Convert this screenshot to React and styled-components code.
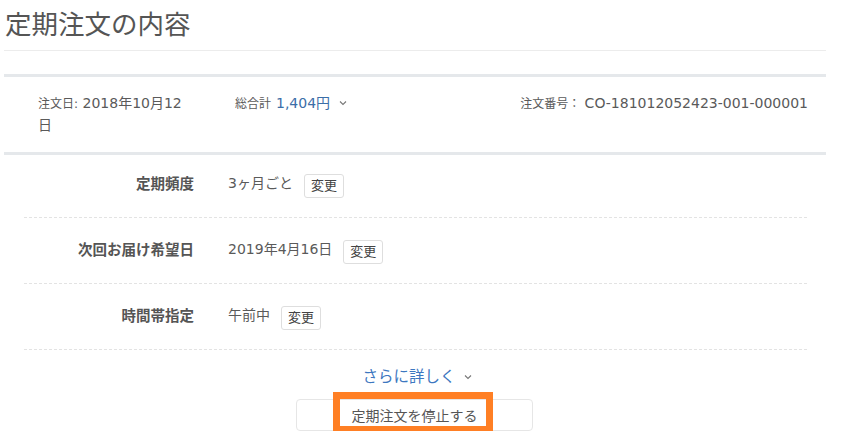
import React from 'react'
import styled, { createGlobalStyle } from 'styled-components'

const Global = createGlobalStyle`
body {
    margin: 0;
    background: #fff;
    font-family: "DejaVu Sans", "Noto Sans CJK JP", sans-serif;
    color: #555;
}
`

const rows = [
    { label: '定期頻度', value: '3ヶ月ごと' },
    { label: '次回お届け希望日', value: '2019年4月16日' },
    { label: '時間帯指定', value: '午前中' },
]

const App = () => {
    return (
        <>
            <Global />
            <Page>
                <Title>定期注文の内容</Title>
                <Summary>
                    <DateCol>
                        <Small>注文日:</Small> 2018年10月12日
                    </DateCol>
                    <TotalCol>
                        <Small>総合計</Small>
                        <Blue>1,404円</Blue>
                        <Chevron />
                    </TotalCol>
                    <NumberCol>
                        <Small>注文番号：</Small> CO-181012052423-001-000001
                    </NumberCol>
                </Summary>
                <Rows>
                    {rows.map((r) => (
                        <Row key={r.label}>
                            <Label>{r.label}</Label>
                            <Value>
                                {r.value}
                                <SmallButton>変更</SmallButton>
                            </Value>
                        </Row>
                    ))}
                </Rows>
                <More>
                    さらに詳しく
                    <Chevron />
                </More>
                <StopWrap>
                    <StopButton>定期注文を停止する</StopButton>
                    <Highlight />
                </StopWrap>
            </Page>
        </>
    )
}

const Chevron = () => (
    <ChevronSvg viewBox="0 0 10 10">
        <path d="M2 3.5 L5 6.5 L8 3.5" fill="none" stroke="currentColor" strokeWidth="1.1" />
    </ChevronSvg>
)

export default App

const Page = styled.div`
width: 822px;
margin-left: 4px;
`

const Title = styled.h1`
margin: 0 0 23px;
height: 51px;
box-sizing: border-box;
padding: 6px 0 0 1px;
font-family: "Noto Sans CJK JP", sans-serif;
font-size: 26.5px;
font-weight: 400;
line-height: 34px;
color: #555;
border-bottom: 1px solid #ececec;
`

const Summary = styled.div`
display: flex;
box-sizing: border-box;
padding: 16px 18px 0 34px;
border-top: 3px solid #e5e8eb;
border-bottom: 3px solid #e5e8eb;
height: 81px;
font-size: 14px;
line-height: 21px;
color: #5a5a5a;
`

const Small = styled.span`
font-size: 12px;
`

const DateCol = styled.div`
width: 153px;
`

const TotalCol = styled.div`
margin-left: 44px;
display: flex;
align-items: baseline;
gap: 5px;
`

const Blue = styled.span`
color: #3b6ea8;
`

const NumberCol = styled.div`
margin-left: auto;
`

const ChevronSvg = styled.svg`
width: 10px;
height: 10px;
margin-left: 3px;
color: #777;
`

const Rows = styled.div`
margin: 0 19px 0 20px;
`

const Row = styled.div`
display: flex;
align-items: center;
height: 66px;
padding-bottom: 5px;
border-bottom: 1px dashed #e3e3e3;
box-sizing: border-box;
&:first-child {
    height: 63px;
    padding-bottom: 8px;
}
`

const Label = styled.div`
width: 170px;
text-align: right;
font-family: "Noto Sans CJK JP", sans-serif;
font-size: 14.5px;
font-weight: 700;
color: #555;
`

const Value = styled.div`
margin-left: 34px;
font-size: 14px;
color: #5a5a5a;
display: flex;
align-items: center;
`

const SmallButton = styled.span`
margin-left: 11px;
margin-top: 8px;
padding: 0 6px;
height: 22px;
line-height: 21px;
font-size: 13px;
border: 1px solid #dedede;
border-radius: 3px;
background: #fff;
color: #444;
`

const More = styled.div`
display: flex;
justify-content: center;
align-items: center;
gap: 4px;
margin-top: 16px;
font-size: 15.5px;
line-height: 22px;
color: #3d77c0;
padding-left: 5px;
`

const StopWrap = styled.div`
position: relative;
width: 237px;
margin: 11px 0 0 292px;
`

const StopButton = styled.div`
height: 32px;
box-sizing: border-box;
border: 1px solid #e6e6e6;
border-radius: 4px;
display: flex;
align-items: center;
justify-content: center;
font-size: 14px;
color: #555;
`

const Highlight = styled.div`
position: absolute;
left: 37px;
top: -7px;
width: 160px;
height: 41px;
box-sizing: border-box;
border: 7px solid #ff7f24;
`
